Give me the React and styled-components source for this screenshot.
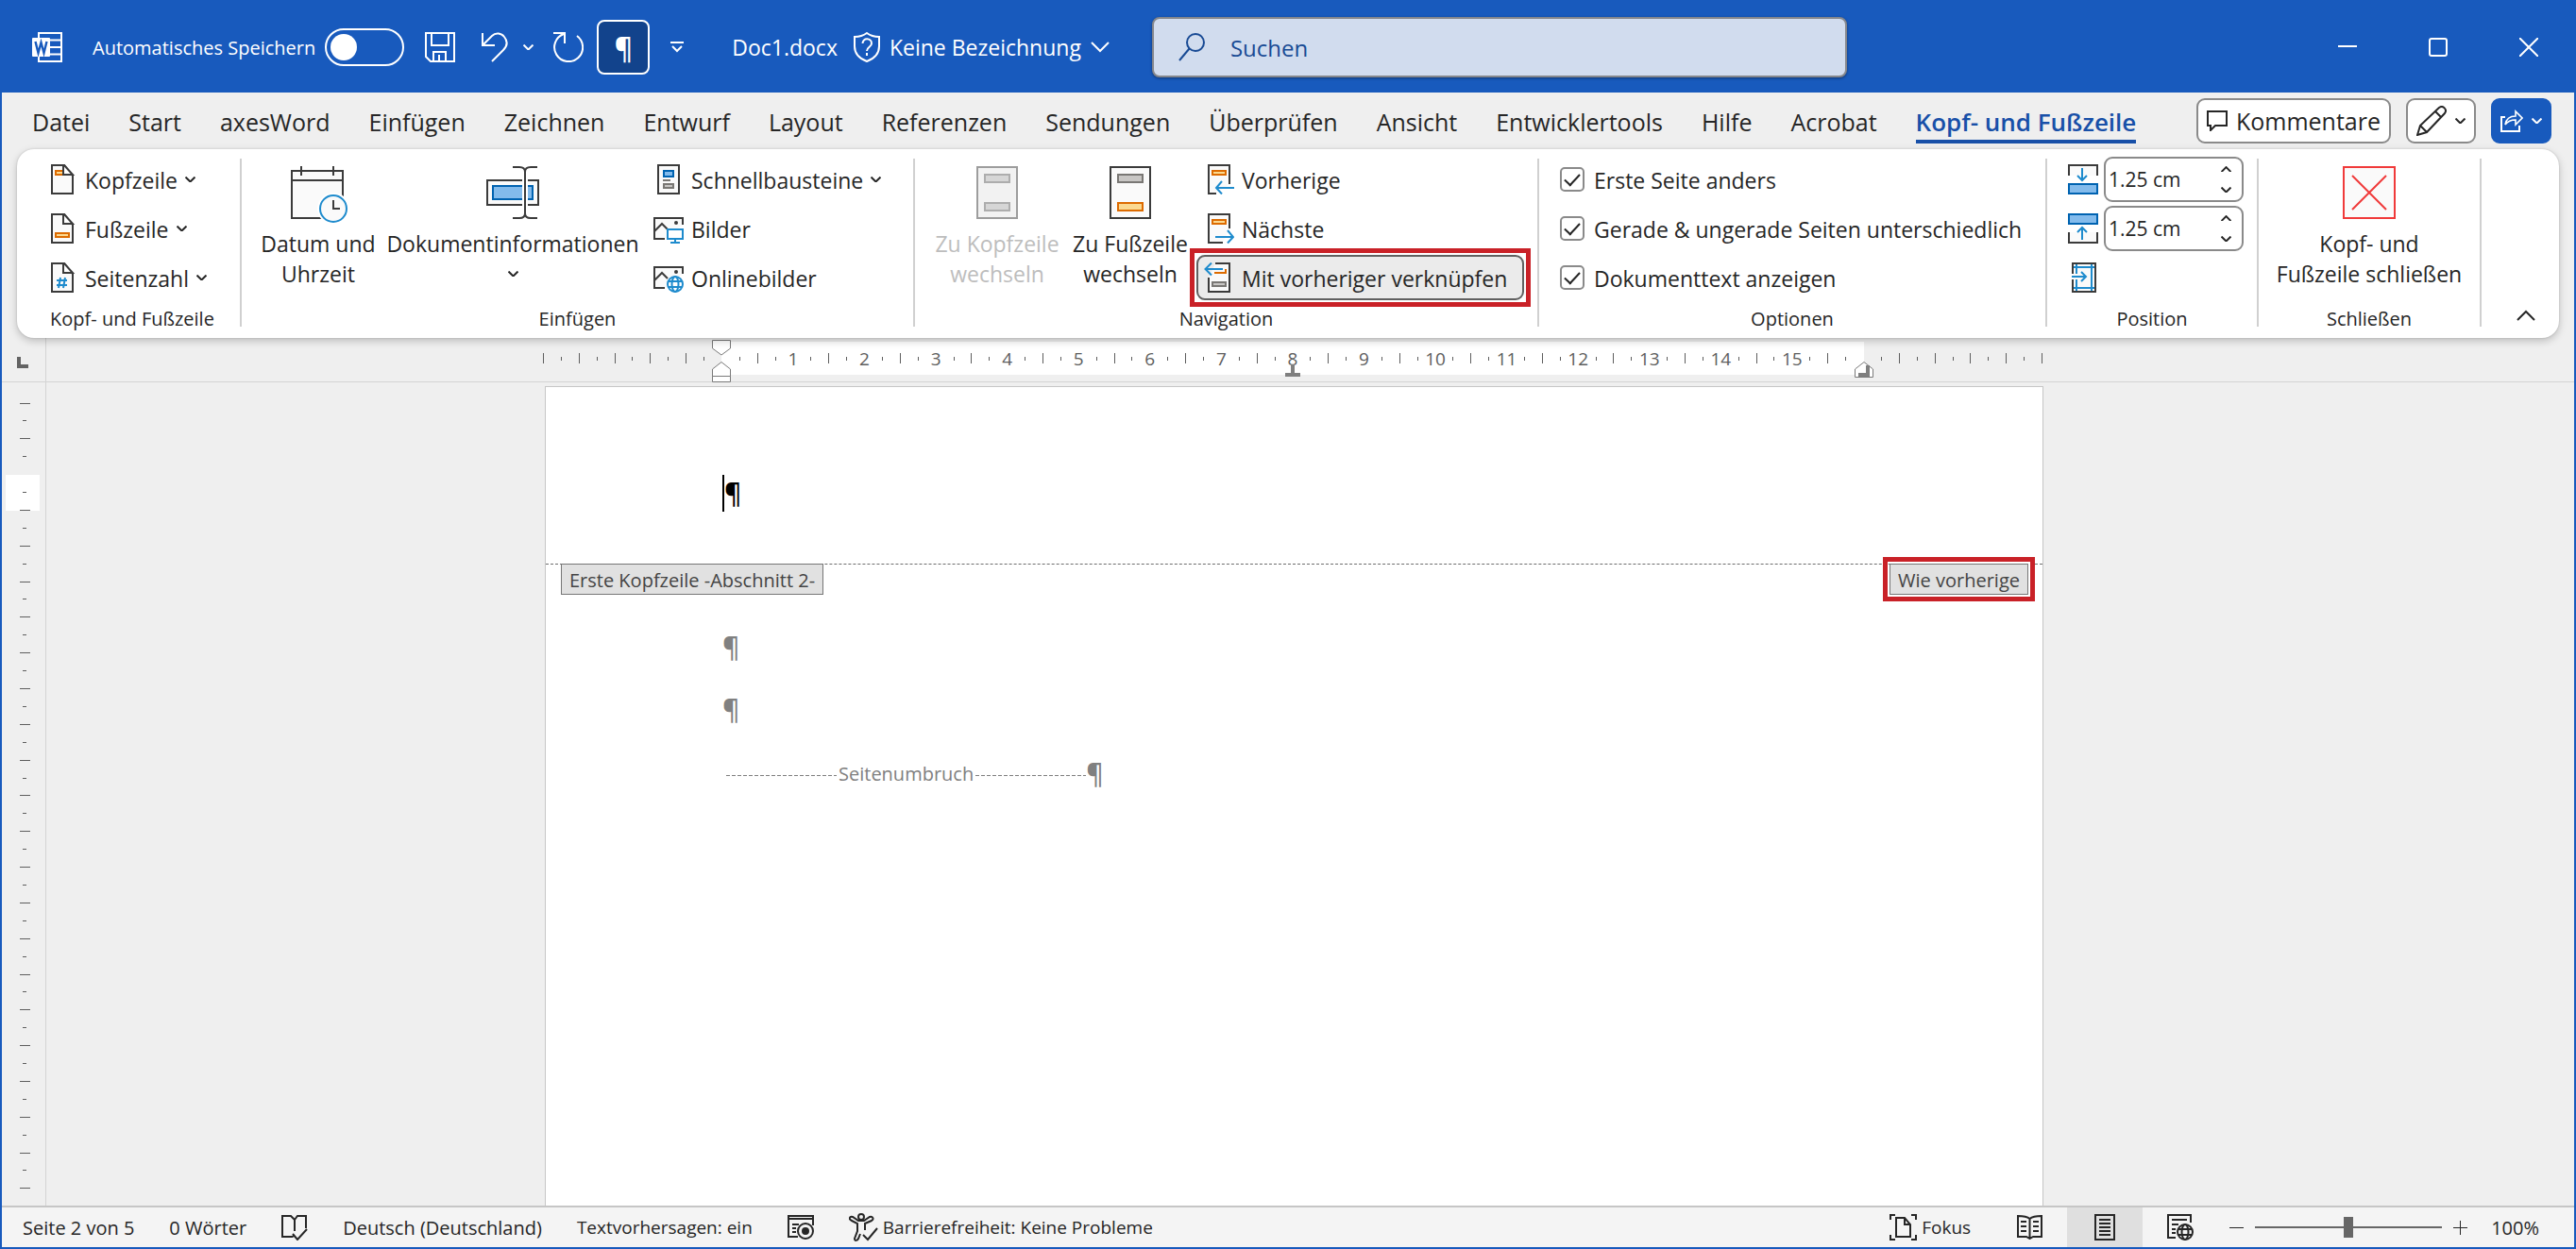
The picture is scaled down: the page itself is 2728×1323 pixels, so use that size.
import { useState } from "react";
import styled, { createGlobalStyle } from "styled-components";

const GlobalStyle = createGlobalStyle`
  * { box-sizing: border-box; }
  body { margin: 0; background: #efefef; }
  body, button, input {
    font-family: "Open Sans", "Noto Sans", sans-serif;
    color: #262626;
  }
  button { background: none; border: 0; padding: 0; margin: 0; cursor: pointer; }
  svg { display: block; flex: none; fill: none; }
`;

const Window = styled.div`
  min-height: 100vh;
  display: flex;
  flex-direction: column;
  border: 2px solid #185abd;
  border-top: 0;
  background: #efefef;
`;

/* ---------- title bar ---------- */

const TitleBar = styled.header`
  height: 98px;
  display: flex;
  align-items: center;
  padding: 2px 0 0 32px;
  background: #185abd;
  color: #fff;
  white-space: nowrap;
`;

const AutoSave = styled.label`
  display: flex;
  align-items: center;
  gap: 10px;
  margin: 0 8px 0 32px;
  font-size: 20px;
`;

const Toggle = styled.input`
  appearance: none;
  width: 84px;
  height: 40px;
  margin: 0;
  padding: 4px;
  border: 2px solid #fff;
  border-radius: 20px;

  &::before {
    content: "";
    display: block;
    width: 28px;
    height: 28px;
    border-radius: 50%;
    background: #fff;
  }
  &:checked::before { margin-left: auto; }
`;

const QatButton = styled.button`
  width: ${(props) => props.$width}px;
  height: 58px;
  display: flex;
  align-items: center;
  justify-content: center;
  margin-left: ${(props) => props.$space || 0}px;
  border: 2px solid ${(props) => (props.$active ? "#fff" : "transparent")};
  border-radius: 8px;
  background: ${(props) => (props.$active ? "#12438c" : "none")};
  color: #fff;
  font-size: 30px;
  font-weight: 600;
`;

const DocName = styled.span`
  margin-left: 29px;
  font-size: 23px;
`;

const LabelButton = styled.button`
  display: flex;
  align-items: center;
  gap: 10px;
  margin-left: 17px;
  color: #fff;
  font-size: 23px;
`;

const Search = styled.label`
  flex: 0 1 736px;
  height: 64px;
  display: flex;
  align-items: center;
  gap: 27px;
  margin-left: 45px;
  padding: 0 26px;
  border: 2px solid #85878c;
  border-radius: 8px;
  background: #d1dcee;
  box-shadow: 0 1px 3px rgba(0, 0, 0, 0.4);
`;

const SearchInput = styled.input`
  flex: 1;
  min-width: 0;
  border: 0;
  padding: 0;
  outline: 0;
  background: none;
  color: #184a94;
  font-size: 24px;
  &::placeholder { color: #184a94; opacity: 1; }
`;

const WindowControls = styled.div`
  display: flex;
  align-self: stretch;
  margin-left: auto;
  button {
    width: 96px;
    display: flex;
    align-items: center;
    justify-content: center;
  }
`;

/* ---------- tabs ---------- */

const TabRow = styled.div`
  display: flex;
  align-items: flex-end;
  justify-content: space-between;
  padding: 6px 24px 6px 32px;
`;

const Tabs = styled.nav`
  display: flex;
  gap: 41px;
`;

const Tab = styled.button`
  border-bottom: 4px solid ${(props) => (props.$active ? "#1850a8" : "transparent")};
  padding-bottom: 2px;
  color: ${(props) => (props.$active ? "#1850a8" : "#262626")};
  font-size: ${(props) => (props.$active ? 26 : 25)}px;
  font-weight: ${(props) => (props.$active ? 600 : 400)};
  line-height: 34px;
  white-space: nowrap;
`;

const TabActions = styled.div`
  display: flex;
  gap: 16px;
`;

const ActionButton = styled.button`
  height: 48px;
  display: flex;
  align-items: center;
  gap: 9px;
  padding: 0 ${(props) => props.$pad || 9}px;
  border: 2px solid ${(props) => (props.$primary ? "#185abd" : "#8a8a8a")};
  border-radius: 9px;
  background: ${(props) => (props.$primary ? "#185abd" : "#fff")};
  color: ${(props) => (props.$primary ? "#fff" : "#262626")};
  font-size: 25px;
`;

/* ---------- ribbon ---------- */

const Ribbon = styled.section`
  position: relative;
  z-index: 1;
  display: flex;
  margin: 0 16px;
  padding: 8px 0 0 8px;
  border-radius: 18px;
  background: #fff;
  box-shadow: 0 3px 8px rgba(0, 0, 0, 0.22), 0 0 2px rgba(0, 0, 0, 0.16);
`;

const Group = styled.div`
  width: ${(props) => props.$width}px;
  display: flex;
  flex-direction: column;
`;

const GroupBody = styled.div`
  min-height: 152px;
  display: flex;
  padding-left: ${(props) => props.$pad || 0}px;
`;

const GroupLabel = styled.div`
  padding: 6px 0;
  font-size: 20px;
  line-height: 28px;
  text-align: center;
`;

const Divider = styled.div`
  width: 2px;
  margin: 2px 0 12px;
  background: #d0d0d0;
`;

const Column = styled.div`
  display: flex;
  flex-direction: column;
  align-items: flex-start;
  gap: 4px;
`;

const RowButton = styled.button`
  position: relative;
  height: 48px;
  display: flex;
  align-items: center;
  gap: 8px;
  padding: 0 16px 0 6px;
  border: 2px solid ${(props) => (props.$pressed ? "#606060" : "transparent")};
  border-radius: 9px;
  background: ${(props) => (props.$pressed ? "#ebebeb" : "none")};
  font-size: 23px;
  white-space: nowrap;

  > svg:first-child { width: 32px; }
  > span { padding-top: 2px; }
`;

const Marked = styled.div`
  position: relative;
  &::after {
    content: "";
    position: absolute;
    inset: -7px;
    border: 5px solid #c92127;
    pointer-events: none;
  }
`;

const BigButton = styled.button`
  width: ${(props) => props.$width}px;
  display: flex;
  flex-direction: column;
  align-items: center;
  padding-top: 10px;
  font-size: 23px;
  line-height: 32px;
  color: #262626;
  &:disabled { color: #bdbdbd; }
`;

const BigIcon = styled.span`
  height: 66px;
`;

const ChevronLine = styled.span`
  height: 32px;
  display: flex;
  align-items: center;
`;

const CheckRow = styled.label`
  height: 48px;
  display: flex;
  align-items: center;
  gap: 10px;
  font-size: 23px;
  white-space: nowrap;
  > span { padding-top: 2px; }
`;

const CheckBox = styled.input`
  appearance: none;
  width: 26px;
  height: 26px;
  display: grid;
  place-items: center;
  margin: 0;
  border: 2px solid #8a8a8a;
  border-radius: 5px;
  background: #fff;

  &:checked::after {
    content: "";
    width: 14px;
    height: 7px;
    border: solid #262626;
    border-width: 0 0 2px 2px;
    transform: translateY(-2px) rotate(-47deg);
  }
`;

const SpinRow = styled.div`
  height: 48px;
  display: flex;
  align-items: center;
  gap: 6px;
`;

const SpinBox = styled.div`
  width: 148px;
  height: 48px;
  display: flex;
  border: 2px solid #8a8a8a;
  border-radius: 9px;
  background: #fff;
`;

const SpinInput = styled.input`
  flex: 1;
  min-width: 0;
  border: 0;
  outline: 0;
  padding: 0 0 0 3px;
  background: none;
  font-size: 21px;
`;

const SpinButtons = styled.div`
  width: 34px;
  display: flex;
  flex-direction: column;
  button {
    flex: 1;
    display: flex;
    align-items: center;
    justify-content: center;
  }
`;

const Collapse = styled.button`
  align-self: flex-end;
  margin: 0 0 14px auto;
  padding: 0 25px 4px 0;
`;

/* ---------- rulers and page ---------- */

const RulerRow = styled.div`
  height: 47px;
  display: flex;
  border-bottom: 1px solid #d4d4d4;
`;

const RulerCorner = styled.div`
  width: 47px;
  border-right: 1px solid #d4d4d4;
  padding: 20px 0 0 16px;
`;

const Canvas = styled.div`
  flex: 1;
  display: flex;
  justify-content: center;
  padding: ${(props) => props.$top || 0}px ${(props) => props.$right || 34}px 0 0;
`;

const HRuler = styled.div`
  width: 1587px;
  display: flex;
  margin: 4px 0 7px;
`;

const RulerPart = styled.div`
  position: relative;
  flex: ${(props) => props.$cm};
  display: flex;
  align-items: center;
  justify-content: space-between;
  background: ${(props) => (props.$text ? "#fff" : "none")};
`;

const Slot = styled.span`
  width: 0;
  display: flex;
  justify-content: center;
  color: #5e5e5e;
  font-size: 19px;
  line-height: 26px;
`;

const Tick = styled.i`
  flex: none;
  width: 1px;
  height: ${(props) => (props.$tall ? 11 : 4)}px;
  background: #5e5e5e;
`;

const Marker = styled.div`
  position: absolute;
  left: ${(props) => props.$at}%;
  top: ${(props) => props.$top}px;
  margin-left: -10px;
`;

const Work = styled.main`
  flex: 1;
  display: flex;
`;

const VRuler = styled.div`
  width: 47px;
  display: flex;
  flex-direction: column;
  justify-content: space-between;
  padding: 22px 0 18px 4px;
  border-right: 1px solid #d4d4d4;
`;

const VSlot = styled.span`
  width: 36px;
  height: 0;
  display: flex;
  align-items: center;
  justify-content: center;
`;

const VBand = styled.span`
  flex: none;
  width: 36px;
  height: 38px;
  display: flex;
  align-items: center;
  justify-content: center;
  background: #fff;
`;

const VTick = styled.i`
  flex: none;
  width: ${(props) => (props.$tall ? 11 : 4)}px;
  height: 1px;
  margin-left: 4px;
  background: #5e5e5e;
`;

const Page = styled.article`
  width: 1587px;
  border: 1px solid #c6c6c6;
  border-bottom: 0;
  background: #fff;
`;

const PageHeader = styled.div`
  position: relative;
  height: 188px;
  padding: 93px 0 0 187px;
  border-bottom: 1px dashed #6e6e6e;
`;

const HeaderLine = styled.div`
  width: 40px;
  height: 39px;
  border-left: 2px solid #000;
  color: #000;
  font-size: 28px;
  font-weight: 600;
  line-height: 39px;
`;

const Tags = styled.div`
  position: absolute;
  top: 187px;
  left: 16px;
  right: 15px;
  display: flex;
  justify-content: space-between;
`;

const Tag = styled.div`
  height: 33px;
  padding: 1px 8px 0;
  border: 1px solid #767676;
  background: #e1e1e1;
  color: #444;
  font-size: 20px;
  line-height: 31px;
`;

const PageBody = styled.div`
  display: flex;
  flex-direction: column;
  gap: 22px;
  padding: 65px 0 0 187px;
  color: #808080;
  font-size: 28px;
  font-weight: 600;
  line-height: 44px;
`;

const BreakLine = styled.div`
  display: flex;
  align-items: center;
  padding-left: 4px;
`;

const BreakText = styled.span`
  padding: 3px 2px 0;
  font-size: 20px;
  font-weight: 400;
`;

const Dashes = styled.span`
  width: 117px;
  height: 1px;
  margin-top: 5px;
  background: repeating-linear-gradient(90deg, #808080 0 4px, transparent 4px 6px);
`;

/* ---------- status bar ---------- */

const StatusBar = styled.footer`
  height: 44px;
  display: flex;
  align-items: stretch;
  justify-content: space-between;
  border-top: 2px solid #c6c6c6;
  background: #f4f4f4;
`;

const StatusSide = styled.div`
  display: flex;
  align-items: stretch;
  gap: ${(props) => props.$gap || 0}px;
  padding-left: 22px;
`;

const StatusButton = styled.button`
  display: flex;
  align-items: center;
  gap: 5px;
  font-size: ${(props) => (props.$small ? 19 : 20)}px;
  white-space: nowrap;
`;

const ViewButton = styled.button`
  width: ${(props) => props.$width || 80}px;
  display: flex;
  align-items: center;
  justify-content: center;
  background: ${(props) => (props.$active ? "#dfdfdf" : "none")};
  font-size: 19px;
`;

const ZoomLevel = styled.button`
  padding: 0 37px 0 14px;
  font-size: 20px;
`;

const ZoomSlider = styled.input`
  appearance: none;
  width: 198px;
  margin: 0;
  background: none;
  &::-webkit-slider-runnable-track { height: 2px; background: #666; }
  &::-webkit-slider-thumb {
    appearance: none;
    width: 10px;
    height: 22px;
    margin-top: -10px;
    background: #666;
  }
`;

/* ---------- icons ---------- */

const DARK = "#3b3b3b";
const PAPER = "#fafafa";
const BLUE = "#1e8bcd";

const Chevron = ({ width = 11, up }) => (
  <svg width={width} height={width * 0.6} viewBox="0 0 20 12" stroke="currentColor" strokeWidth={width > 15 ? 2 : 3.6}>
    <path d={up ? "M1 11L10 2L19 11" : "M1 1L10 10L19 1"} />
  </svg>
);

const WordLogo = () => (
  <svg width="32" height="32" viewBox="0 0 32 32">
    <path d="M7 6V1H31V31H7V26M19 8.500H31M19 16H31M19 23.500H31" stroke="#fff" strokeWidth="2" />
    <rect x="0" y="6" width="19" height="20" rx="1" fill="#fff" />
    <path d="M3.500 10L6.500 22L9.500 11L12.500 22L15.500 10" stroke="#185abd" strokeWidth="2.400" />
  </svg>
);

const SaveIcon = () => (
  <svg width="32" height="32" viewBox="0 0 32 32" stroke="#fff" strokeWidth="2">
    <path d="M1 1H31V31H6L1 26ZM7 1V14H25V1M9 31V21H22V31M15 24V31" />
  </svg>
);

const UndoIcon = () => (
  <svg width="28" height="32" viewBox="0 0 28 32" stroke="#fff" strokeWidth="2">
    <path d="M1 1V14H14M1 14L11 4C15 0 21 1 24 5C28 10 27 15 23 19L11 31" />
  </svg>
);

const RedoIcon = () => (
  <svg width="32" height="32" viewBox="0 0 32 32" stroke="#fff" strokeWidth="2">
    <path d="M0 1H12V12M11 2A15 15 0 1 0 25 4" />
  </svg>
);

const CustomizeIcon = () => (
  <svg width="14" height="12" viewBox="0 0 14 12" stroke="#fff" strokeWidth="2">
    <path d="M0 1H14M2 5L7 10L12 5" />
  </svg>
);

const ShieldIcon = () => (
  <svg width="28" height="32" viewBox="0 0 28 32" stroke="#fff" strokeWidth="2">
    <path d="M14 1C10 4 6 5 1 5V15C1 23 6 28 14 31C22 28 27 23 27 15V5C22 5 18 4 14 1Z" />
    <path d="M9.500 12C9.500 5.500 19 6 19 12C19 16 14 15.500 14 20M14 22V25" />
  </svg>
);

const SearchIcon = () => (
  <svg width="28" height="30" viewBox="0 0 28 30" stroke="#184a94" strokeWidth="2">
    <circle cx="18" cy="10" r="9" />
    <path d="M11.500 16.500L1 29" />
  </svg>
);

const CommentIcon = () => (
  <svg width="22" height="22" viewBox="0 0 22 22" stroke="#262626" strokeWidth="2">
    <path d="M1 1H21V16H9L4 21V16H1Z" />
  </svg>
);

const PenIcon = () => (
  <svg width="32" height="32" viewBox="0 0 32 32" stroke="#262626" strokeWidth="2">
    <path d="M1 31L4 21L24 2C28 -1 33 4 30 8L11 28ZM4 21L11 28M20 6L26 12" />
  </svg>
);

const ShareIcon = () => (
  <svg width="24" height="24" viewBox="0 0 24 24" stroke="#fff" strokeWidth="2">
    <path d="M5 8H1V23H20V17" />
    <path d="M5 16C6 10 10 7 16 7V2L23 9L16 16V11C11 11 8 12 5 16Z" strokeWidth="1.600" />
  </svg>
);

const PageIcon = ({ kind }) => (
  <svg width="24" height="32" viewBox="-4 0 32 32" strokeWidth="2">
    <path d="M1 1H14L23 12V31H1Z" fill={PAPER} stroke={DARK} />
    {kind === "header" && <path d="M5 7H13V11H5Z" fill="#fbd990" stroke="#dd6b00" />}
    {kind === "footer" && <path d="M5 21H19V25H5Z" fill="#fbd990" stroke="#dd6b00" />}
    {kind === "number" && <path d="M10 16L8 27M15 16L13 27M6 19H17M6 24H17" stroke={BLUE} />}
    <path d="M13 1V11H23L14 1Z" fill="#fff" stroke={DARK} />
  </svg>
);

const CalendarIcon = () => (
  <svg width="62" height="60" viewBox="0 0 62 60" strokeWidth="2">
    <path d="M3 5H57V55H3Z" fill={PAPER} stroke={DARK} />
    <path d="M3 15H57M13 0V10M47 0V10" stroke={DARK} />
    <circle cx="47" cy="45" r="17" fill="#fff" />
    <circle cx="47" cy="45" r="14" fill={PAPER} stroke={BLUE} />
    <path d="M47 36V45H54" stroke={DARK} />
  </svg>
);

const FieldIcon = () => (
  <svg width="56" height="56" viewBox="0 0 56 56" strokeWidth="2">
    <path d="M1 15H55V41H1Z" fill={PAPER} stroke={DARK} />
    <path d="M7 21H49V35H7Z" fill="#83bbec" stroke="#0063b1" />
    <path d="M41 12V44" stroke="#fff" strokeWidth="6" />
    <path d="M28 1H35C39 1 41 3 41 6V50C41 53 39 55 35 55H28M54 1H47C43 1 41 3 41 6M54 55H47C43 55 41 53 41 50" stroke={DARK} />
  </svg>
);

const QuickPartsIcon = () => (
  <svg width="32" height="32" viewBox="0 0 32 32" strokeWidth="2">
    <path d="M5 1H27V31H5Z" fill={PAPER} stroke={DARK} />
    <path d="M11 7H21V13H11Z" fill="#83bbec" stroke="#0063b1" />
    <path d="M10 17H18" stroke="#797774" />
    <path d="M11 21H21V25H11Z" fill="#c8c6c4" stroke="#797774" />
  </svg>
);

const PictureIcon = ({ online }) => (
  <svg width="32" height="32" viewBox="0 0 32 32" strokeWidth="2">
    <path d="M12 27H1V5H31V12" fill={PAPER} stroke={DARK} />
    <path d="M1 19L9 11L15 17" stroke={DARK} />
    <circle cx="24" cy="10" r="2" fill={DARK} />
    {online ? (
      <g stroke={BLUE}>
        <circle cx="23" cy="23" r="8" fill="#fff" />
        <path d="M15 20H31M15 26H31" />
        <ellipse cx="23" cy="23" rx="3.500" ry="8" />
      </g>
    ) : (
      <g stroke={BLUE}>
        <path d="M15 17H31V27H15Z" fill="#fff" />
        <path d="M23 27V31M18 31H28" />
      </g>
    )}
  </svg>
);

const GotoIcon = ({ disabled }) => (
  <svg width="44" height="56" viewBox="0 0 44 56" strokeWidth="2">
    <path d="M1 1H43V55H1Z" fill={disabled ? "#f2f2f2" : PAPER} stroke={disabled ? "#9d9d9d" : DARK} />
    <path d="M9 9H35V17H9Z" fill={disabled ? "#d6d6d6" : "#c8c6c4"} stroke={disabled ? "#adadad" : "#797774"} />
    <path d="M9 39H35V47H9Z" fill={disabled ? "#d6d6d6" : "#fbd990"} stroke={disabled ? "#adadad" : "#dd6b00"} />
  </svg>
);

const StepIcon = ({ next }) => (
  <svg width="32" height="32" viewBox="0 0 32 32" strokeWidth="2">
    <path d={next ? "M20 31H5V1H27V16" : "M13 31H5V1H27V21"} fill={PAPER} stroke={DARK} />
    <path d="M9 7H23V11H9Z" fill="#fbd990" stroke="#dd6b00" />
    <path d={next ? "M12 25H31M25 18L31 25L25 31.500" : "M32 25H13M19 18L13 25L19 31.500"} stroke={BLUE} />
  </svg>
);

const LinkIcon = () => (
  <svg width="32" height="32" viewBox="0 0 32 32" strokeWidth="2">
    <path d="M12 1H27V31H5V16" fill={PAPER} stroke={DARK} />
    <path d="M11 11H23V7" stroke="#dd6b00" />
    <path d="M9 21H23V25H9Z" fill="#c8c6c4" stroke="#797774" />
    <path d="M20 7H2M8 0.500L1.500 7L8 13.500" stroke={BLUE} />
  </svg>
);

const FromTopIcon = () => (
  <svg width="32" height="32" viewBox="0 0 32 32" strokeWidth="2">
    <path d="M1 12V1H31V12" fill={PAPER} stroke={DARK} />
    <path d="M15 4V17M10 12L15 17L20 12" stroke={BLUE} />
    <path d="M1 21H31V31H1Z" fill="#83bbec" stroke="#0063b1" />
  </svg>
);

const FromBottomIcon = () => (
  <svg width="32" height="32" viewBox="0 0 32 32" strokeWidth="2">
    <path d="M1 20V31H31V20" fill={PAPER} stroke={DARK} />
    <path d="M15 28V15M10 20L15 15L20 20" stroke={BLUE} />
    <path d="M1 1H31V11H1Z" fill="#83bbec" stroke="#0063b1" />
  </svg>
);

const AlignTabIcon = () => (
  <svg width="32" height="32" viewBox="0 0 32 32" strokeWidth="2">
    <path d="M5 12V1H29V31H5V18" fill={PAPER} stroke={DARK} />
    <path d="M6 5H28M6 27H28M9 2V12M9 18V30M25 2V30" stroke={BLUE} />
    <path d="M4 15H18M14 10L19 15L14 20" stroke={BLUE} />
  </svg>
);

const CloseIcon = () => (
  <svg width="56" height="56" viewBox="0 0 56 56" stroke="#f03a3a" strokeWidth="2">
    <path d="M1 1H55V55H1Z" fill={PAPER} />
    <path d="M10 10L46 46M46 10L10 46" />
  </svg>
);

const ProofIcon = () => (
  <svg width="28" height="28" viewBox="0 0 28 28" stroke="#262626" strokeWidth="2">
    <path d="M12 24H1V2H10L14 6V18M14 6L17 2H26V15M12 24L14 22M12 21L17 27L27 16" />
  </svg>
);

const MacroIcon = () => (
  <svg width="28" height="26" viewBox="0 0 28 26" stroke="#262626" strokeWidth="2">
    <path d="M11 23H1V1H27V11M1 4H27M5 10H12M5 14H9M5 18H9" />
    <circle cx="19" cy="17" r="8" fill="#f4f4f4" />
    <circle cx="19" cy="17" r="3" fill="#262626" />
  </svg>
);

const AccessIcon = () => (
  <svg width="31" height="30" viewBox="0 0 31 30" stroke="#262626" strokeWidth="2">
    <circle cx="13" cy="4" r="3" />
    <path d="M17 18V11L24 8C27 6 25 3 22 4L16 8H10L4 4C1 3 -1 6 3 8L9 11V19L6 27C6 30 9 29 10 27L12 22M15 23L20 28L30 16" />
  </svg>
);

const FocusIcon = () => (
  <svg width="29" height="28" viewBox="0 0 29 28" stroke="#262626" strokeWidth="2">
    <path d="M6 1H1V6M23 1H28V6M6 27H1V22M23 27H28V22M7 4H16L22 11V24H7ZM16 4V11H22" />
  </svg>
);

const ReadIcon = () => (
  <svg width="27" height="26" viewBox="0 0 27 26" stroke="#262626" strokeWidth="2">
    <path d="M13.500 4C10 1 6 1 1 1V23H10L13.500 25L17 23H26V1C21 1 17 1 13.500 4ZM13.500 4V24M4 7H10M4 12H10M4 17H10M17 7H23M17 12H23M17 17H23" />
  </svg>
);

const PrintIcon = () => (
  <svg width="22" height="28" viewBox="0 0 22 28" stroke="#262626" strokeWidth="2">
    <path d="M1 1H21V27H1ZM5 6H17M5 10H17M5 14H17M5 18H17M5 22H17" />
  </svg>
);

const WebIcon = () => (
  <svg width="28" height="28" viewBox="0 0 28 28" stroke="#262626" strokeWidth="2">
    <path d="M9 25H1V1H25V9M5 6H21M5 11H12M5 16H9M5 20H9" />
    <circle cx="19" cy="19" r="8" fill="#f4f4f4" />
    <path d="M11 16H27M11 22H27" />
    <ellipse cx="19" cy="19" rx="3.500" ry="8" />
  </svg>
);

/* ---------- parts ---------- */

const TABS = [
  "Datei", "Start", "axesWord", "Einfügen", "Zeichnen", "Entwurf", "Layout", "Referenzen",
  "Sendungen", "Überprüfen", "Ansicht", "Entwicklertools", "Hilfe", "Acrobat", "Kopf- und Fußzeile",
];

const OPTIONS = ["Erste Seite anders", "Gerade & ungerade Seiten unterschiedlich", "Dokumenttext anzeigen"];

const range = (n) => Array.from({ length: n }, (_, i) => i);

const SpinField = ({ label, icon }) => {
  const [value, setValue] = useState(1.25);
  const step = (by) => setValue((v) => Math.max(0, v + by));
  return (
    <SpinRow>
      {icon}
      <SpinBox>
        <SpinInput aria-label={label} value={`${value.toFixed(2)} cm`} readOnly />
        <SpinButtons>
          <button aria-label="Erhöhen" onClick={() => step(0.1)}><Chevron up /></button>
          <button aria-label="Verringern" onClick={() => step(-0.1)}><Chevron /></button>
        </SpinButtons>
      </SpinBox>
    </SpinRow>
  );
};

// margin parts have ticks only, without a mark on the text border
const MarginTicks = ({ skip }) =>
  range(11).map((i) => <Slot key={i}>{i !== skip && <Tick $tall={i % 2 === 0} />}</Slot>);

const HorizontalRuler = () => (
  <HRuler>
    <RulerPart $cm="2.5"><MarginTicks skip={10} /></RulerPart>
    <RulerPart $cm="16" $text>
      {range(65).map((i) => (
        <Slot key={i}>
          {i % 4 !== 0 && <Tick $tall={i % 2 === 0} />}
          {i % 4 === 0 && i > 0 && i < 64 && i / 4}
        </Slot>
      ))}
      <Marker $at={0} $top={-2}>
        <svg width="20" height="46" viewBox="0 0 20 46" stroke="#7a7a7a">
          <path d="M0.500 0.500H19.500V9L10 16L0.500 9Z" fill="#fff" />
          <path d="M0.500 38.500V31L10 23.500L19.500 31V38.500ZM0.500 38.500H19.500V44.500H0.500Z" fill="#fff" />
        </svg>
      </Marker>
      <Marker $at={50} $top={24}>
        <svg width="20" height="13" viewBox="0 0 20 13">
          <path d="M8 0H12V9H18V13H2V9H8Z" fill="#7f7f7f" />
        </svg>
      </Marker>
      <Marker $at={100} $top={21}>
        <svg width="20" height="17" viewBox="0 0 20 17">
          <path d="M0.500 16.500V8L10 0.500L19.500 8V16.500Z" stroke="#7a7a7a" fill="#fff" />
          <path d="M12 4H16V16H4V12H12Z" fill="#7f7f7f" />
        </svg>
      </Marker>
    </RulerPart>
    <RulerPart $cm="2.5"><MarginTicks skip={0} /></RulerPart>
  </HRuler>
);

const VerticalRuler = () => (
  <VRuler>
    {range(45).map((i) => (
      <VSlot key={i}>
        {i === 5 && <VBand><VTick /></VBand>}
        {i !== 5 && i !== 4 && <VTick $tall={i % 2 === 0} />}
      </VSlot>
    ))}
  </VRuler>
);

const App = () => {
  const [checked, setChecked] = useState([true, true, true]);
  const [zoom, setZoom] = useState(100);
  const toggle = (i) => setChecked(checked.map((c, n) => (n === i ? !c : c)));

  return (
    <Window>
      <GlobalStyle />
      <TitleBar>
        <WordLogo />
        <AutoSave>
          Automatisches Speichern
          <Toggle type="checkbox" role="switch" />
        </AutoSave>
        <QatButton $width={60} aria-label="Speichern"><SaveIcon /></QatButton>
        <QatButton $width={56} aria-label="Rückgängig"><UndoIcon /></QatButton>
        <QatButton $width={14} aria-label="Rückgängig-Liste"><Chevron /></QatButton>
        <QatButton $width={60} $space={6} aria-label="Wiederholen"><RedoIcon /></QatButton>
        <QatButton $width={56} $active aria-pressed="true">¶</QatButton>
        <QatButton $width={58} aria-label="Symbolleiste anpassen"><CustomizeIcon /></QatButton>
        <DocName>Doc1.docx</DocName>
        <LabelButton>
          <ShieldIcon />
          Keine Bezeichnung
          <Chevron width={20} />
        </LabelButton>
        <Search>
          <SearchIcon />
          <SearchInput type="text" placeholder="Suchen" aria-label="Suchen" />
        </Search>
        <WindowControls>
          <button aria-label="Minimieren">
            <svg width="20" height="20" stroke="#fff" strokeWidth="2"><path d="M0 9H20" /></svg>
          </button>
          <button aria-label="Maximieren">
            <svg width="20" height="20" stroke="#fff" strokeWidth="2"><rect x="1" y="1" width="18" height="18" rx="2" /></svg>
          </button>
          <button aria-label="Schließen">
            <svg width="20" height="20" stroke="#fff" strokeWidth="2"><path d="M0 0L20 20M20 0L0 20" /></svg>
          </button>
        </WindowControls>
      </TitleBar>

      <TabRow>
        <Tabs>
          {TABS.map((name) => (
            <Tab key={name} $active={name === "Kopf- und Fußzeile"}>{name}</Tab>
          ))}
        </Tabs>
        <TabActions>
          <ActionButton><CommentIcon />Kommentare</ActionButton>
          <ActionButton aria-label="Bearbeitung"><PenIcon /><Chevron /></ActionButton>
          <ActionButton $pad={8} $primary aria-label="Freigeben"><ShareIcon /><Chevron /></ActionButton>
        </TabActions>
      </TabRow>

      <Ribbon>
        <Group $width={228}>
          <GroupBody $pad={16}>
            <Column>
              <RowButton><PageIcon kind="header" /><span>Kopfzeile</span><Chevron /></RowButton>
              <RowButton><PageIcon kind="footer" /><span>Fußzeile</span><Chevron /></RowButton>
              <RowButton><PageIcon kind="number" /><span>Seitenzahl</span><Chevron /></RowButton>
            </Column>
          </GroupBody>
          <GroupLabel>Kopf- und Fußzeile</GroupLabel>
        </Group>
        <Divider />
        <Group $width={711}>
          <GroupBody $pad={16}>
            <BigButton $width={130}>
              <BigIcon><CalendarIcon /></BigIcon>
              Datum und<br />Uhrzeit
            </BigButton>
            <BigButton $width={282}>
              <BigIcon><FieldIcon /></BigIcon>
              Dokumentinformationen
              <ChevronLine><Chevron /></ChevronLine>
            </BigButton>
            <Column>
              <RowButton><QuickPartsIcon /><span>Schnellbausteine</span><Chevron /></RowButton>
              <RowButton><PictureIcon /><span>Bilder</span></RowButton>
              <RowButton><PictureIcon online /><span>Onlinebilder</span></RowButton>
            </Column>
          </GroupBody>
          <GroupLabel>Einfügen</GroupLabel>
        </Group>
        <Divider />
        <Group $width={659}>
          <GroupBody $pad={16}>
            <BigButton $width={142} disabled>
              <BigIcon><GotoIcon disabled /></BigIcon>
              Zu Kopfzeile<br />wechseln
            </BigButton>
            <BigButton $width={140}>
              <BigIcon><GotoIcon /></BigIcon>
              Zu Fußzeile<br />wechseln
            </BigButton>
            <Column>
              <RowButton><StepIcon /><span>Vorherige</span></RowButton>
              <RowButton><StepIcon next /><span>Nächste</span></RowButton>
              <Marked>
                <RowButton $pressed aria-pressed="true"><LinkIcon /><span>Mit vorheriger verknüpfen</span></RowButton>
              </Marked>
            </Column>
          </GroupBody>
          <GroupLabel>Navigation</GroupLabel>
        </Group>
        <Divider />
        <Group $width={536}>
          <GroupBody $pad={22}>
            <Column>
              {OPTIONS.map((name, i) => (
                <CheckRow key={name}>
                  <CheckBox type="checkbox" checked={checked[i]} onChange={() => toggle(i)} />
                  <span>{name}</span>
                </CheckRow>
              ))}
            </Column>
          </GroupBody>
          <GroupLabel>Optionen</GroupLabel>
        </Group>
        <Divider />
        <Group $width={222}>
          <GroupBody $pad={22}>
            <Column>
              <SpinField label="Kopfzeile von oben" icon={<FromTopIcon />} />
              <SpinField label="Fußzeile von unten" icon={<FromBottomIcon />} />
              <SpinRow as="button" aria-label="Ausrichtungstabstopp einfügen"><AlignTabIcon /></SpinRow>
            </Column>
          </GroupBody>
          <GroupLabel>Position</GroupLabel>
        </Group>
        <Divider />
        <Group $width={234}>
          <GroupBody>
            <BigButton $width={234}>
              <BigIcon><CloseIcon /></BigIcon>
              Kopf- und<br />Fußzeile schließen
            </BigButton>
          </GroupBody>
          <GroupLabel>Schließen</GroupLabel>
        </Group>
        <Divider />
        <Collapse aria-label="Menüband reduzieren"><Chevron width={20} up /></Collapse>
      </Ribbon>

      <RulerRow>
        <RulerCorner>
          <svg width="12" height="12"><path d="M0 0H4V8H12V12H0Z" fill="#636363" /></svg>
        </RulerCorner>
        <Canvas $right={37}><HorizontalRuler /></Canvas>
      </RulerRow>

      <Work>
        <VerticalRuler />
        <Canvas $top={4}>
          <Page>
            <PageHeader>
              <HeaderLine>¶</HeaderLine>
              <Tags>
                <Tag>Erste Kopfzeile -Abschnitt 2-</Tag>
                <Marked><Tag>Wie vorherige</Tag></Marked>
              </Tags>
            </PageHeader>
            <PageBody>
              <div>¶</div>
              <div>¶</div>
              <BreakLine>
                <Dashes /><BreakText>Seitenumbruch</BreakText><Dashes />¶
              </BreakLine>
            </PageBody>
          </Page>
        </Canvas>
      </Work>

      <StatusBar>
        <StatusSide $gap={37}>
          <StatusButton>Seite 2 von 5</StatusButton>
          <StatusButton>0 Wörter</StatusButton>
          <StatusButton aria-label="Rechtschreibung"><ProofIcon /></StatusButton>
          <StatusButton>Deutsch (Deutschland)</StatusButton>
          <StatusButton $small>Textvorhersagen: ein</StatusButton>
          <StatusButton aria-label="Makro aufzeichnen"><MacroIcon /></StatusButton>
          <StatusButton $small><AccessIcon />Barrierefreiheit: Keine Probleme</StatusButton>
        </StatusSide>
        <StatusSide>
          <StatusSide $gap={22}>
            <StatusButton $small><FocusIcon />Fokus</StatusButton>
            <ViewButton aria-label="Lesemodus"><ReadIcon /></ViewButton>
          </StatusSide>
          <ViewButton $active aria-label="Seitenlayout"><PrintIcon /></ViewButton>
          <ViewButton aria-label="Weblayout"><WebIcon /></ViewButton>
          <ViewButton $width={39} aria-label="Verkleinern" onClick={() => setZoom(zoom - 10)}>
            <svg width="15" height="15" stroke="#262626"><path d="M0 7.500H15" /></svg>
          </ViewButton>
          <ZoomSlider
            type="range"
            min="10"
            max="190"
            aria-label="Zoom"
            value={zoom}
            onChange={(e) => setZoom(Number(e.target.value))}
          />
          <ViewButton $width={38} aria-label="Vergrößern" onClick={() => setZoom(zoom + 10)}>
            <svg width="15" height="15" stroke="#262626"><path d="M0 7.500H15M7.500 0V15" /></svg>
          </ViewButton>
          <ZoomLevel>{zoom}%</ZoomLevel>
        </StatusSide>
      </StatusBar>
    </Window>
  );
};

export default App;
